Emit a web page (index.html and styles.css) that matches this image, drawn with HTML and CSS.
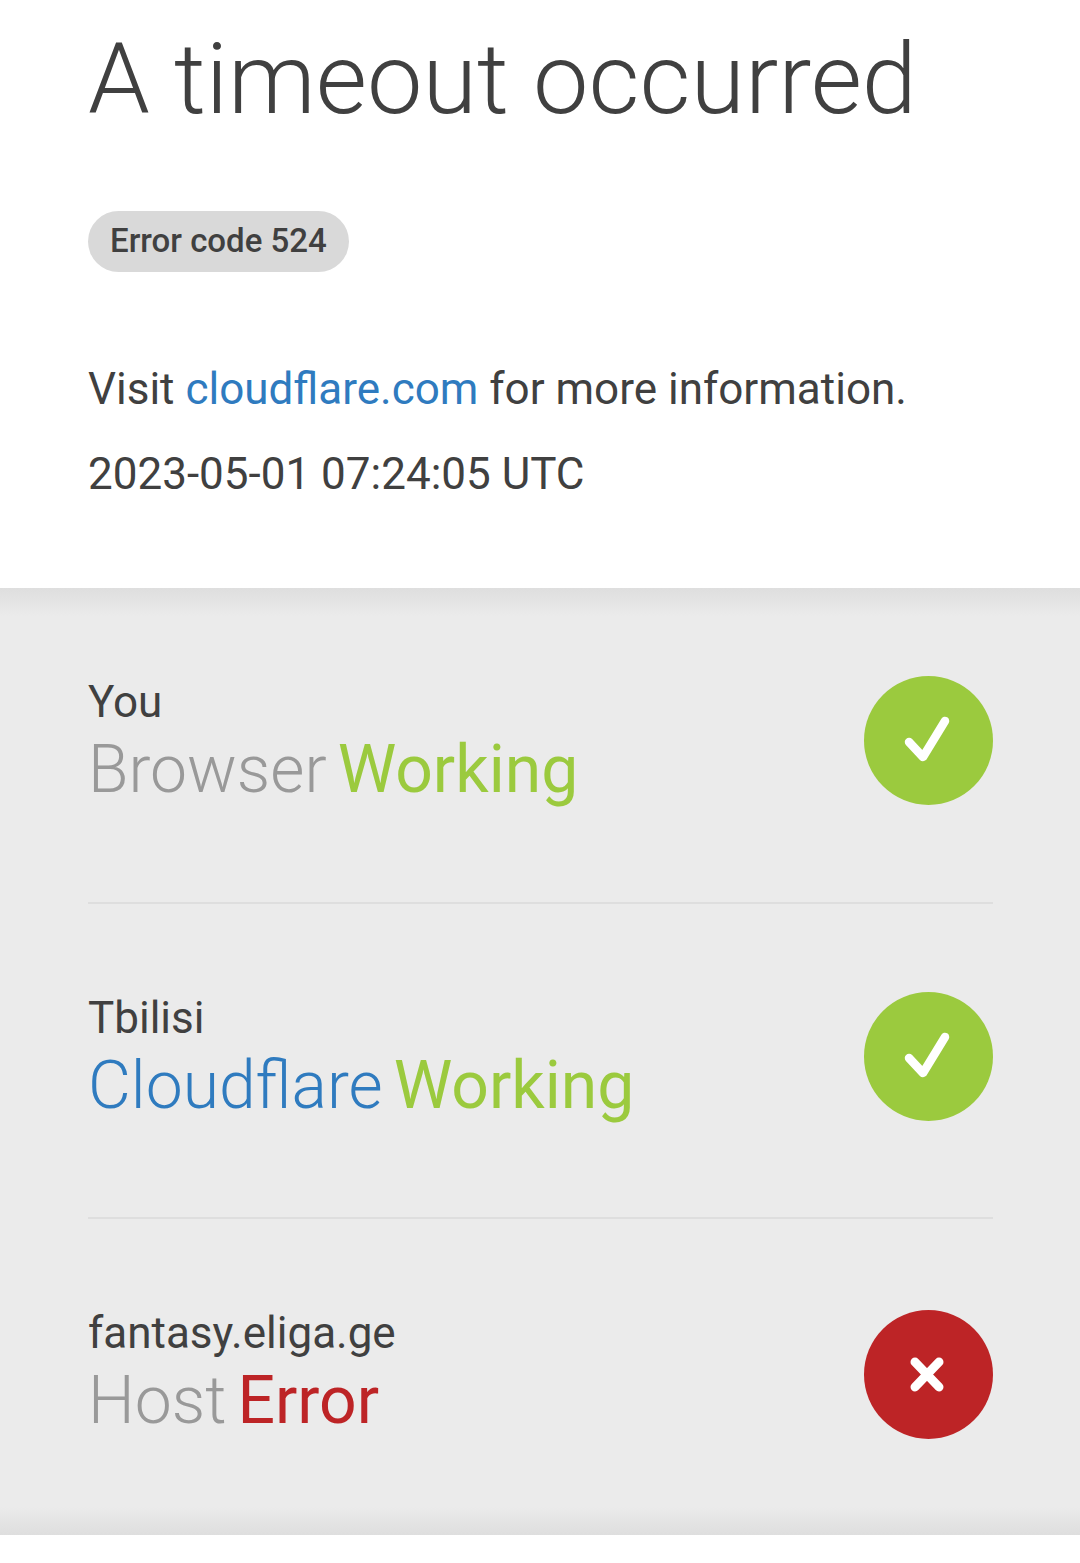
FILE: index.html
```html
<!DOCTYPE html>
<html lang="en">
<head>
    <meta charset="UTF-8">
    <meta name="viewport" content="width=device-width, initial-scale=1.0">
    <title>A timeout occurred</title>
    <link rel="stylesheet" href="styles.css">
</head>
<body>
    <div class="header">
        <h1 class="title">A timeout occurred</h1>
        <div class="code-wrap"><span class="code">Error code 524</span></div>
        <p class="visit">Visit <a class="link" href="#">cloudflare.com</a> for more information.</p>
        <p class="time">2023-05-01 07:24:05 UTC</p>
    </div>
    <div class="status">
        <div class="row">
            <div class="info">
                <div class="place">You</div>
                <div class="line"><span class="name grey">Browser</span><span class="green">Working</span></div>
            </div>
            <svg class="icon" viewBox="0 0 129 129">
                <circle cx="64.5" cy="64.5" r="64.5" fill="#9bca3e"/>
                <path d="M45 66 L59 81 L81 45" fill="none" stroke="#fff" stroke-width="8.5" stroke-linecap="round" stroke-linejoin="round"/>
            </svg>
        </div>
        <div class="row">
            <div class="info">
                <div class="place">Tbilisi</div>
                <div class="line"><span class="name blue">Cloudflare</span><span class="green">Working</span></div>
            </div>
            <svg class="icon" viewBox="0 0 129 129">
                <circle cx="64.5" cy="64.5" r="64.5" fill="#9bca3e"/>
                <path d="M45 66 L59 81 L81 45" fill="none" stroke="#fff" stroke-width="8.5" stroke-linecap="round" stroke-linejoin="round"/>
            </svg>
        </div>
        <div class="row">
            <div class="info">
                <div class="place">fantasy.eliga.ge</div>
                <div class="line"><span class="name grey">Host</span><span class="red">Error</span></div>
            </div>
            <svg class="icon icon-error" viewBox="0 0 129 129">
                <circle cx="64.5" cy="64.5" r="64.5" fill="#bd2426"/>
                <path d="M51 52 L75 77 M75 52 L51 77" fill="none" stroke="#fff" stroke-width="9" stroke-linecap="round"/>
            </svg>
        </div>
    </div>
</body>
</html>
```

FILE: styles.css
```css
*{
    box-sizing: border-box;
}
html,body{
    margin: 0;
    background: #fff;
    font-family: Roboto, "Liberation Sans", sans-serif;
    color: #404040;
}
.header{
    height: 588px;
    padding: 0 88px;
}
.title{
    margin: 0;
    padding-top: 21px;
    font-size: 99px;
    font-weight: 300;
    line-height: 116px;
}
.code-wrap{
    margin-top: 74px;
}
.code{
    display: inline-block;
    height: 61px;
    padding: 0 22px;
    border-radius: 31px;
    background: #d9d9d9;
    font-size: 33px;
    font-weight: 500;
    line-height: 59px;
}
.visit,.time{
    margin: 0;
    font-size: 44px;
    line-height: 60px;
}
.visit{
    margin-top: 87px;
}
.time{
    margin-top: 25px;
}
.link{
    color: #2f7bbf;
    text-decoration: none;
}
.status{
    height: 947px;
    padding: 0 87px 0 88px;
    background: linear-gradient(#dedede, #ebebeb 3%, #ebebeb 97%, #dedede);
}
.row{
    display: flex;
    justify-content: space-between;
    height: 315px;
    padding-top: 88px;
    border-bottom: 2px solid #dedede;
}
.row:first-child{
    height: 316px;
}
.row:last-child{
    border-bottom: 0;
}
.place{
    font-size: 44px;
    line-height: 52px;
}
.line{
    margin-top: 8px;
    font-size: 66px;
    font-weight: 300;
    line-height: 68px;
}
.name{
    margin-right: 11px;
}
.grey{
    color: #999;
}
.blue{
    color: #2f7bbf;
}
.green{
    color: #9bca3e;
    font-weight: 400;
}
.red{
    color: #bd2426;
    font-weight: 400;
}
.icon{
    width: 129px;
    height: 129px;
    flex: none;
}
.icon-error{
    margin-top: 3px;
}
```
